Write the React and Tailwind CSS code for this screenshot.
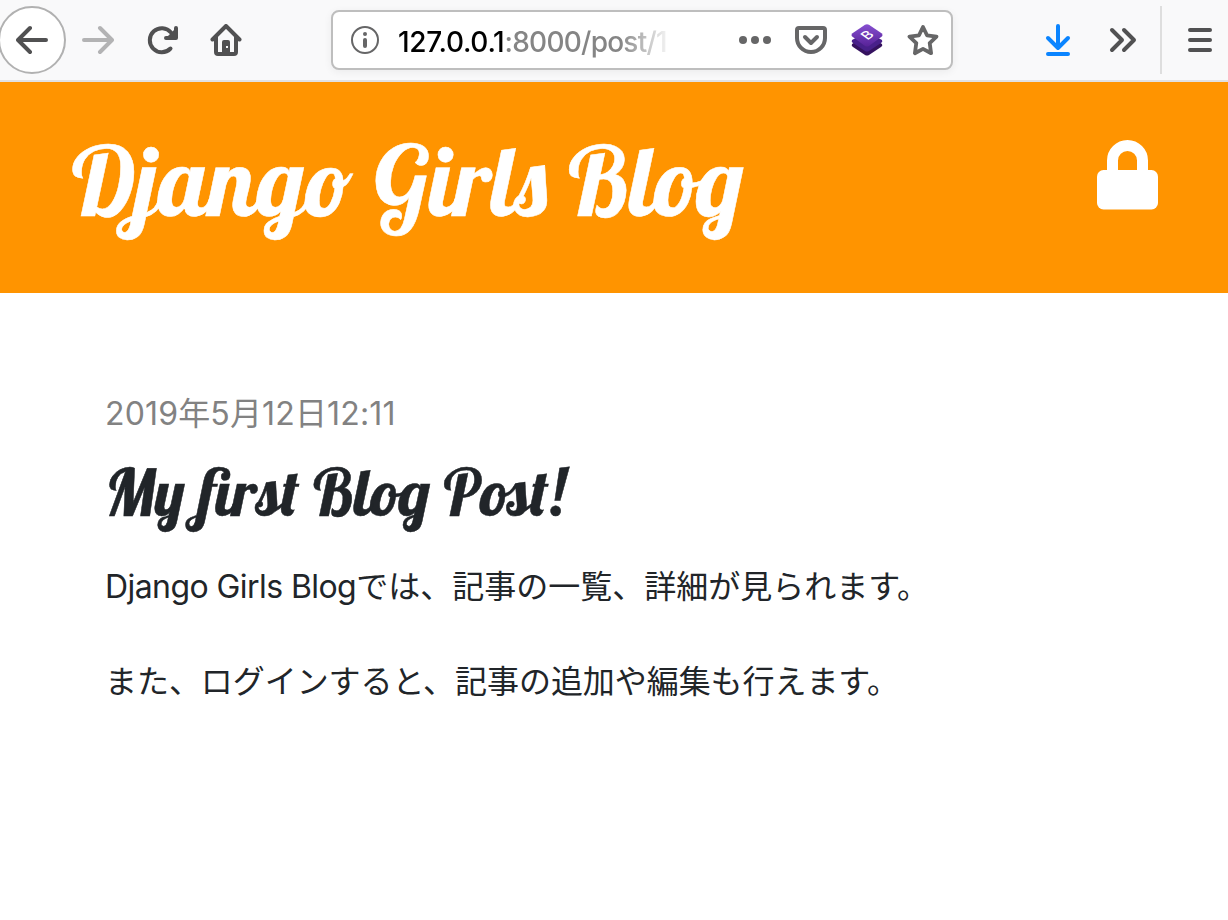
function Icon({ children, className = "" }) {
  return (
    <svg
      viewBox="0 0 32 32"
      className={`h-8 w-8 shrink-0 ${className}`}
      fill="none"
      stroke="currentColor"
      strokeWidth="4"
      strokeLinecap="round"
      strokeLinejoin="round"
      aria-hidden="true"
    >
      {children}
    </svg>
  );
}

function AddressBar() {
  return (
    <div className="ml-[89px] flex h-[60px] w-[622px] shrink-0 items-center rounded-[8px] border-2 border-[#bebebe] bg-white pl-4 pr-[12px] text-[#666667] shadow-[0_2px_8px_rgba(0,0,0,0.06)]">
      <Icon>
        <circle cx="16" cy="16" r="13" strokeWidth="2" />
        <circle cx="16" cy="10" r="2" fill="currentColor" stroke="none" />
        <path d="M16 16v6" />
      </Icon>
      <div className="ml-[17px] w-[274px] whitespace-nowrap pt-[3px] font-['Inter','Liberation_Sans',sans-serif] text-[28px] font-[450] leading-[40px] tracking-[-0.75px] text-[#858585] mask-r-from-[222px] mask-r-to-[274px]">
        <span className="tracking-[-0.3px] text-black">127.0.0.1</span>:8000/post/1
      </div>
      <div className="ml-auto flex gap-6">
        <Icon>
          <g fill="currentColor" stroke="none">
            <circle cx="4" cy="16" r="4" />
            <circle cx="16" cy="16" r="4" />
            <circle cx="28" cy="16" r="4" />
          </g>
        </Icon>
        <Icon>
          <path d="M4 4h24a2 2 0 0 1 2 2v8a14 14 0 0 1-28 0V6a2 2 0 0 1 2-2Z" />
          <path d="m10 13 6 6 6-6" />
        </Icon>
        <Icon>
          <defs>
            <linearGradient id="layer-top" x1="0" y1="0" x2="0" y2="1">
              <stop stopColor="#8750d1" />
              <stop offset="1" stopColor="#572297" />
            </linearGradient>
          </defs>
          <g stroke="none">
            <path fill="#35125f" d="M1 20q-1 2 1 3l12 8q2 1 4 0l12-8q2-1 1-3L16 11Z" />
            <path fill="#48208a" d="M1 16q-1 2 1 3l12 8q2 1 4 0l12-8q2-1 1-3L16 8Z" />
            <path fill="url(#layer-top)" d="M14 .7q2-1 4 0l12.500 8.500q2 1.800 0 3.600L18 22q-2 1-4 0L1.500 12.800q-2-1.800 0-3.600Z" />
          </g>
          <text
            transform="matrix(0.86 -0.62 0.86 0.62 16 11)"
            textAnchor="middle"
            y="4.700"
            fill="#ffffff"
            stroke="none"
            className="font-['Inter',sans-serif] text-[13px] font-medium"
          >
            B
          </text>
        </Icon>
        <Icon>
          <path
            strokeWidth="3.800"
            d="m16 3 4 8.300 9.500 1.300-6.800 6.500 1.400 10.100L16 24.900l-8.100 4.300 1.400-10.100-6.800-6.500L12 11.300Z"
          />
        </Icon>
      </div>
    </div>
  );
}

function Toolbar() {
  return (
    <div className="flex h-[82px] items-center overflow-hidden border-b-2 border-[#e1e1e2] bg-[#f9f9fa] text-[#515152]">
      <div className="-ml-[2px] flex h-[68px] w-[68px] shrink-0 items-center justify-center rounded-full border-2 border-[#b1b1b1] bg-white">
        <Icon>
          <path d="M30 16H3M14 4 2 16l12 12" />
        </Icon>
      </div>
      <Icon className="ml-4 text-[#b3b3b4]">
        <path d="M2 16h27M18 4l12 12-12 12" />
      </Icon>
      <Icon className="ml-8">
        <path d="M24.500 24.500A12 12 0 1 1 25 8.500" />
        <path d="M30 4v10H20Z" fill="currentColor" stroke="none" />
        <path d="M30 4v10H20" />
      </Icon>
      <Icon className="ml-8">
        <path d="M2.500 15.500 16 2l13.500 13.500" />
        <path d="M6 13v15a2 2 0 0 0 2 2h16a2 2 0 0 0 2-2V13" />
        <path
          d="M14 16h4a2 2 0 0 1 2 2v12h-8V18a2 2 0 0 1 2-2Zm2 6v2h2v-2Z"
          fill="currentColor"
          fillRule="evenodd"
          stroke="none"
        />
      </Icon>
      <AddressBar />
      <Icon className="ml-[89px] text-[#0a84ff]">
        <path d="M16 2v22M6 14l10 10 10-10M6 30h20" />
      </Icon>
      <Icon className="ml-8">
        <path d="m6 6 10 10L6 26M18 6l10 10-10 10" />
      </Icon>
      <div className="ml-[22px] h-[68px] w-0.5 shrink-0 bg-[#dedede]" />
      <Icon className="ml-[22px]">
        <path d="M6 6h20M6 16h20M6 26h20" />
      </Icon>
    </div>
  );
}

function SiteHeader() {
  return (
    <header className="flex h-[211px] items-start justify-between bg-[#ff9400] pl-[72px] pr-[70px] text-white">
      <h1 className="mt-[38px] whitespace-nowrap font-['Lobster','Liberation_Serif',serif] text-[96px] font-medium leading-[120px] [-webkit-text-stroke:0.5px_white]">
        Django Girls Blog
      </h1>
      <svg viewBox="0 0 61 70" className="mt-[58px] h-[70px] w-[61px] shrink-0" aria-hidden="true">
        <rect y="30" width="61" height="39.500" rx="6.500" fill="currentColor" />
        <path d="M15.500 32V20.500a15 15 0 0 1 30 0V32" fill="none" stroke="currentColor" strokeWidth="11" />
      </svg>
    </header>
  );
}

export default function App() {
  return (
    <div className="flex h-[920px] w-[1228px] flex-col overflow-hidden bg-white">
      <Toolbar />
      <SiteHeader />
      <main className="pl-[105px] pt-[97px] font-['Inter','Noto_Sans_CJK_JP',sans-serif] text-[32px] leading-[48px] text-[#212529]">
        <time className="block h-12 whitespace-nowrap font-[430] tracking-[0.15px] text-[#828282]">2019年5月12日12:11</time>
        <h2 className="mt-4 h-[77px] whitespace-nowrap font-['Lobster','Liberation_Serif',serif] text-[64px] font-medium leading-[77px] [-webkit-text-stroke:0.5px_#212529]">
          My first Blog Post!
        </h2>
        <p className="mt-8 whitespace-nowrap">
          <span className="font-[430] tracking-[-0.57px]">Django Girls Blog</span>では、記事の一覧、詳細が見られます。
        </p>
        <p className="mt-[47px] whitespace-nowrap tracking-[-0.06px]">また、ログインすると、記事の追加や編集も行えます。</p>
      </main>
    </div>
  );
}
